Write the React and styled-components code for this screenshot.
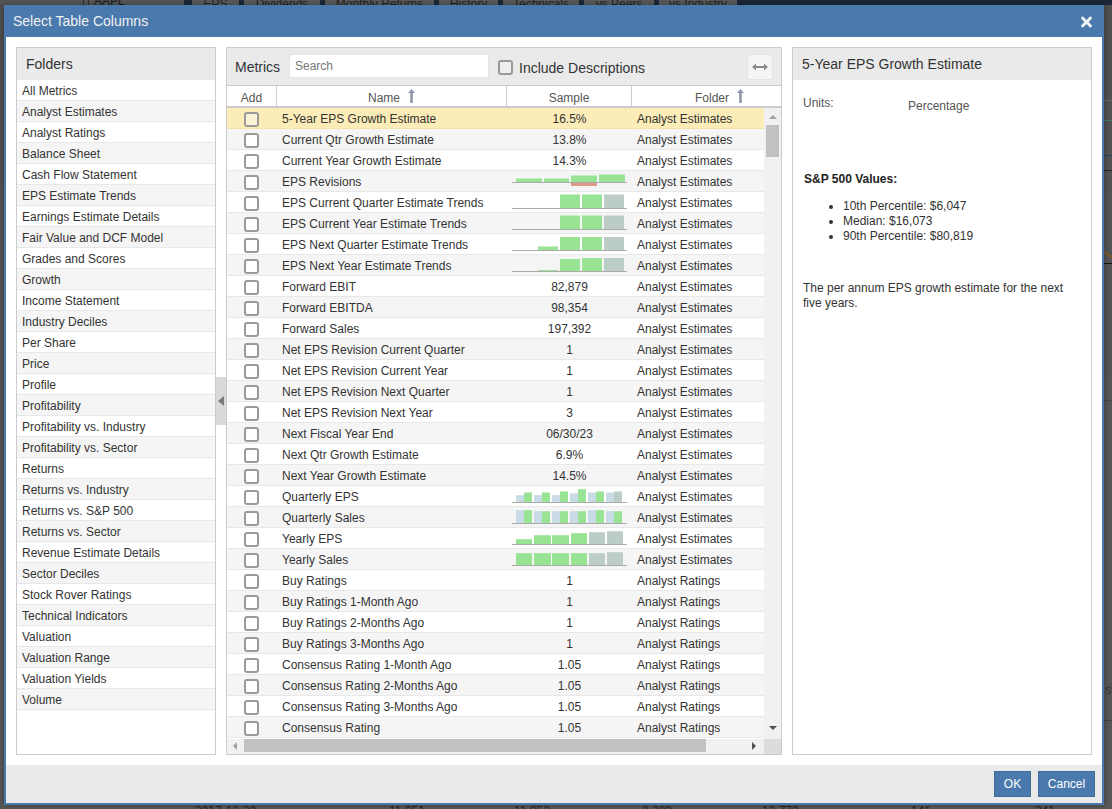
import React from 'react';
import styled, { createGlobalStyle } from 'styled-components';
import { FaTimes } from 'react-icons/fa';

const Global = createGlobalStyle`
  html, body { margin: 0; padding: 0; width: 1112px; height: 809px; overflow: hidden; background: #555; }
  * { box-sizing: border-box; }
`;

const Page = styled.div`
  position: relative;
  width: 1112px;
  height: 809px;
  overflow: hidden;
  background: linear-gradient(180deg, #4e4e4e 0, #545454 30%, #585858 100%);
  font-family: "Liberation Sans", Arial, sans-serif;
  display: flex;
  flex-direction: column;
  justify-content: space-between;
`;

const BackTop = styled.div`
  height: 5px;
  display: flex;
  overflow: hidden;
`;

const BackTicker = styled.div`
  width: 184px;
  flex: none;
  padding-left: 83px;
  display: flex;
  font-size: 12px;
  color: #1d1d1d;
  background: #555;
  & > span { display: block; margin: -6px 0 0 5px; }
`;

const BackRule = styled.i`
  display: block;
  width: 6px;
  height: 5px;
  border-left: 1px solid #2c2c2c;
  border-right: 1px solid #2c2c2c;
`;

const BackTabs = styled.div`
  flex: 1;
  background: #1b2738;
  padding-left: 8px;
  display: flex;
  gap: 5px;
`;

const BackTab = styled.div`
  height: 5px;
  width: ${p => p.$w}px;
  flex: none;
  background: #5a5a5a;
  font-size: 12px;
  line-height: 12px;
  color: #222;
  text-align: center;
  white-space: nowrap;
  & > span { display: block; margin-top: -2px; }
`;

const BackBottom = styled.div`
  height: 4px;
  overflow: hidden;
  padding-left: 195px;
  display: grid;
  grid-template-columns: 194px 125px 128px 120px 149px 124px 1fr;
  font-size: 12px;
  color: #222;
  & > span { display: block; margin-top: -1px; }
`;

const BackChart = styled.svg`
  position: absolute;
  top: 0;
  right: 0;
  display: block;
`;

const BackEdgeText = styled.span`
  position: absolute;
  left: 1105px;
  top: 683px;
  font-size: 12px;
  color: #333;
`;

const Modal = styled.div`
  position: absolute;
  left: 4px;
  top: 5px;
  width: 1100px;
  height: 800px;
  background: #fff;
  border: 2px solid #4a7aad;
  border-top: 0;
  display: flex;
  flex-direction: column;
  box-shadow: 0 0 6px rgba(0, 0, 0, 0.35);
`;

const TitleBar = styled.div`
  height: 32px;
  margin: 0 -2px;
  padding: 0 11px 0 9px;
  background: #4a7aad;
  color: #f0f0f0;
  display: flex;
  align-items: center;
  justify-content: space-between;
  font-size: 14px;
  flex: none;
`;

const Title = styled.span`
  padding-left: 0;
`;

const CloseIcon = styled(FaTimes)`
  width: 13px;
  height: 16px;
  margin-top: 1px;
  color: #f2f4f8;
`;

const Body = styled.div`
  flex: 1;
  min-height: 0;
  padding: 10px;
  display: flex;
`;

const Panel = styled.div`
  height: 708px;
  border: 1px solid #ccc;
  background: #fff;
  display: flex;
  flex-direction: column;
  flex: none;
  width: ${p => p.$w}px;
  overflow: hidden;
`;

const PanelHead = styled.div`
  height: 32px;
  flex: none;
  background: #eaeaea;
  padding: 0 ${p => p.$pad}px;
  display: flex;
  align-items: center;
  font-size: 14px;
  color: #333;
`;

const FolderRow = styled.div`
  height: 21px;
  flex: none;
  padding: 2px 0 0 5px;
  display: flex;
  align-items: center;
  font-size: 12px;
  color: #333;
  background: ${p => (p.$alt ? '#f5f5f5' : '#fff')};
  border-bottom: 1px solid #e8e8e8;
`;

const Splitter = styled.div`
  width: 10px;
  flex: none;
  display: flex;
  align-items: center;
`;

const SplitHandle = styled.div`
  width: 10px;
  height: 48px;
  background: #d9d9d9;
  display: flex;
  align-items: center;
  justify-content: center;
  margin-top: -1px;
  &::before {
    content: '';
    border-style: solid;
    border-width: 5px 6px 5px 0;
    border-color: transparent #7a7a7a transparent transparent;
  }
`;

const Gap = styled.div`
  width: 10px;
  flex: none;
`;

const MetricsBar = styled.div`
  height: 38px;
  flex: none;
  background: #eaeaea;
  padding: 6px 8px 0 8px;
  display: flex;
  align-items: flex-start;
  border-bottom: 1px solid #ccc;
`;

const MetricsLabel = styled.span`
  font-size: 14px;
  color: #333;
  width: 54px;
  flex: none;
  line-height: 27px;
`;

const SearchBox = styled.div`
  width: 200px;
  height: 24px;
  background: #fff;
  border: 1px solid #e4e4e4;
  font-size: 12px;
  color: #777;
  padding-left: 5px;
  line-height: 22px;
  flex: none;
`;

const BarCheck = styled.span`
  width: 15px;
  height: 15px;
  border: 2px solid #999;
  border-radius: 3px;
  background: #eeeeee;
  margin: 6px 6px 0 9px;
  flex: none;
`;

const BarLabel = styled.span`
  font-size: 14px;
  color: #333;
  line-height: 29px;
  flex: 1;
`;

const FitButton = styled.div`
  width: 26px;
  height: 26px;
  background: #f5f5f5;
  border: 1px solid #e4e4e4;
  display: flex;
  align-items: center;
  justify-content: center;
  flex: none;
`;

const HeadRow = styled.div`
  height: 22px;
  flex: none;
  display: grid;
  grid-template-columns: 50px 230px 125px 1fr;
  border-bottom: 2px solid #ccc;
  background: #fff;
`;

const HeadCell = styled.div`
  font-size: 12px;
  color: #555;
  display: flex;
  align-items: center;
  justify-content: center;
  gap: 8px;
  border-right: ${p => (p.$last ? '0' : '1px solid #ccc')};
  padding-top: 4px;
  padding-left: ${p => p.$shift || 0}px;
  position: relative;
`;

const HeadArrow = styled.svg`
  display: block;
  margin-top: -4px;
`;

const TableArea = styled.div`
  position: relative;
  flex: 1;
  min-height: 0;
  display: grid;
  grid-template-columns: 1fr 17px;
  grid-template-rows: 1fr 15px;
  background: #f1f1f1;
`;

const RowsClip = styled.div`
  overflow: hidden;
  background: #fff;
`;

const Row = styled.div`
  height: 21px;
  display: grid;
  grid-template-columns: 50px 230px 125px 1fr;
  grid-template-rows: 20px;
  align-items: center;
  font-size: 12px;
  color: #333;
  background: ${p => (p.$sel ? '#fcedb8' : p.$alt ? '#f5f5f5' : '#fff')};
  border-bottom: 1px solid ${p => (p.$sel ? '#f3e3a8' : '#e8e8e8')};
`;

const RowCheck = styled.span`
  width: 15px;
  height: 15px;
  justify-self: center;
  margin: 3px 2px 0 0;
  border: 2px solid #9a9a9a;
  border-radius: 3px;
  background: ${p => (p.$sel ? '#fbf3d6' : '#fff')};
`;

const NameCell = styled.span`
  padding: 2px 0 0 5px;
  white-space: nowrap;
  overflow: hidden;
`;

const SampleCell = styled.span`
  text-align: center;
  padding-top: 2px;
`;

const FolderCell = styled.span`
  padding: 2px 0 0 5px;
  white-space: nowrap;
`;

const VBar = styled.div`
  background: #f1f1f1;
  display: flex;
  flex-direction: column;
  align-items: center;
  padding-top: 7px;
  position: relative;
`;

const Tri = styled.span`
  width: 0;
  height: 0;
  flex: none;
  border-style: solid;
  ${p => p.$dir === 'up' && 'border-width: 0 4px 4px 4px; border-color: transparent transparent #a3a3a3 transparent;'}
  ${p => p.$dir === 'down' && 'border-width: 4px 4px 0 4px; border-color: #505050 transparent transparent transparent;'}
  ${p => p.$dir === 'left' && 'border-width: 4px 4px 4px 0; border-color: transparent #a3a3a3 transparent transparent;'}
  ${p => p.$dir === 'right' && 'border-width: 4px 0 4px 4px; border-color: transparent transparent transparent #505050;'}
`;

const VThumb = styled.div`
  width: 13px;
  height: 32px;
  background: #c1c1c1;
  margin-top: 6px;
  flex: none;
`;

const VDown = styled(Tri)`
  margin-top: auto;
  margin-bottom: 9px;
`;

const HBar = styled.div`
  background: #f1f1f1;
  display: flex;
  align-items: flex-start;
  padding-left: 6px;
`;

const HThumb = styled.div`
  width: 462px;
  height: 13px;
  background: #c1c1c1;
  margin-left: 7px;
  flex: none;
`;

const HLeft = styled(Tri)`
  margin-top: 3px;
`;

const HRight = styled(Tri)`
  margin: 3px 0 0 46px;
`;

const Corner = styled.div`
  background: #dcdcdc;
`;

const DetailBody = styled.div`
  padding: 0 10px;
  font-size: 12px;
  color: #333;
  line-height: 15px;
  flex: 1;
`;

const UnitsRow = styled.div`
  display: grid;
  grid-template-columns: 105px 1fr;
  color: #555;
  padding-top: 16px;
`;

const UnitsValue = styled.span`
  padding-top: 3px;
`;

const ValuesTitle = styled.div`
  font-weight: bold;
  margin-top: 58px;
  padding-left: 1px;
  color: #222;
`;

const ValuesList = styled.ul`
  margin: 12px 0 0;
  padding: 0 0 0 40px;
`;

const Desc = styled.p`
  margin: 37px 0 0;
`;

const Footer = styled.div`
  height: 38px;
  flex: none;
  background: #eaeaea;
  display: flex;
  justify-content: flex-end;
  align-items: flex-start;
  padding: 6px 7px 0 0;
  gap: 7px;
`;

const Btn = styled.div`
  height: 26px;
  width: ${p => p.$w}px;
  background: #4a7aad;
  border: 1px solid #3f6d9f;
  color: #fff;
  font-size: 12px;
  display: flex;
  align-items: center;
  justify-content: center;
`;

const TABS = [
  ['EPS', 47], ['Dividends', 76], ['Monthly Returns', 109], ['History', 59],
  ['Technicals', 76], ['vs Peers', 70], ['vs Industry', 78],
];

const FOLDERS = [
  'All Metrics', 'Analyst Estimates', 'Analyst Ratings', 'Balance Sheet', 'Cash Flow Statement',
  'EPS Estimate Trends', 'Earnings Estimate Details', 'Fair Value and DCF Model', 'Grades and Scores',
  'Growth', 'Income Statement', 'Industry Deciles', 'Per Share', 'Price', 'Profile', 'Profitability',
  'Profitability vs. Industry', 'Profitability vs. Sector', 'Returns', 'Returns vs. Industry',
  'Returns vs. S&P 500', 'Returns vs. Sector', 'Revenue Estimate Details', 'Sector Deciles',
  'Stock Rover Ratings', 'Technical Indicators', 'Valuation', 'Valuation Range', 'Valuation Yields', 'Volume',
];

const G = '#98e394';
const S = '#bccdc6';
const B = '#c9dbe5';
const R = '#dc9b86';

const trend = (a, b, c, d) => [
  [26, 20, a, G], [48, 20, b, G], [70, 20, c, G], [92, 20, d, S],
];

const pairs = (list) =>
  list.flatMap(([b, g, last], i) => {
    const x = 4 + i * 18;
    return [[x, 8, b, B], [x + 8, 8, g, last ? S : G]];
  });

const SPARK = {
  rev: {
    base: 11.5,
    bars: [[4, 26, 4, G], [32, 25, 4, G], [59, 26, 7, G], [87, 26, 8, G], [59, 26, -3.5, R]],
  },
  q1: { base: 16.5, bars: [[48, 20, 14, G], [70, 20, 14, G], [92, 20, 14, S]] },
  q2: { base: 16.5, bars: [[48, 20, 14, G], [70, 20, 14, G], [92, 20, 14, S]] },
  q3: { base: 16.5, bars: trend(4, 13.5, 13.5, 13.5) },
  q4: { base: 16.5, bars: trend(1.5, 12.5, 13.5, 13.5) },
  qe: {
    base: 16.5,
    bars: pairs([[7.3, 10], [7.3, 10], [7.3, 11], [9.3, 13.3], [10, 11], [10, 11, true]]),
  },
  qs: {
    base: 16.5,
    bars: pairs([[13.3, 13.3], [12.3, 12.3], [12.3, 12.3], [12.3, 12.3], [13.3, 13.3], [12.3, 12.3]]),
  },
  ye: {
    base: 16.5,
    bars: [[4, 16, 5.3, G], [22, 17, 9.3, G], [40, 17, 9.3, G], [59, 16, 11.3, G], [77, 16, 12.3, S], [95, 16, 13.3, S]],
  },
  ys: {
    base: 16.5,
    bars: [[4, 16, 12.3, G], [22, 17, 12.3, G], [40, 17, 12.3, G], [59, 16, 12.3, G], [77, 16, 12.3, S], [95, 16, 13.3, S]],
  },
};

const E = 'Analyst Estimates';
const A = 'Analyst Ratings';
const ROWS = [
  ['5-Year EPS Growth Estimate', '16.5%', E],
  ['Current Qtr Growth Estimate', '13.8%', E],
  ['Current Year Growth Estimate', '14.3%', E],
  ['EPS Revisions', 'rev', E],
  ['EPS Current Quarter Estimate Trends', 'q1', E],
  ['EPS Current Year Estimate Trends', 'q2', E],
  ['EPS Next Quarter Estimate Trends', 'q3', E],
  ['EPS Next Year Estimate Trends', 'q4', E],
  ['Forward EBIT', '82,879', E],
  ['Forward EBITDA', '98,354', E],
  ['Forward Sales', '197,392', E],
  ['Net EPS Revision Current Quarter', '1', E],
  ['Net EPS Revision Current Year', '1', E],
  ['Net EPS Revision Next Quarter', '1', E],
  ['Net EPS Revision Next Year', '3', E],
  ['Next Fiscal Year End', '06/30/23', E],
  ['Next Qtr Growth Estimate', '6.9%', E],
  ['Next Year Growth Estimate', '14.5%', E],
  ['Quarterly EPS', 'qe', E],
  ['Quarterly Sales', 'qs', E],
  ['Yearly EPS', 'ye', E],
  ['Yearly Sales', 'ys', E],
  ['Buy Ratings', '1', A],
  ['Buy Ratings 1-Month Ago', '1', A],
  ['Buy Ratings 2-Months Ago', '1', A],
  ['Buy Ratings 3-Months Ago', '1', A],
  ['Consensus Rating 1-Month Ago', '1.05', A],
  ['Consensus Rating 2-Months Ago', '1.05', A],
  ['Consensus Rating 3-Months Ago', '1.05', A],
  ['Consensus Rating', '1.05', A],
];

const SparkSvg = styled.svg`
  display: block;
  margin-left: 5px;
`;

function Spark({ id }) {
  const { base, bars } = SPARK[id];
  return (
    <SparkSvg width="115" height="20" viewBox="0 0 115 20">
      {bars.map(([x, w, h, c], i) => (
        <rect key={i} x={x} y={h > 0 ? base - h : base} width={w} height={Math.abs(h)} fill={c} />
      ))}
      <rect x="0" y={base - 0.5} width="115" height="1" fill="#aaa" />
    </SparkSvg>
  );
}

function SortArrow() {
  return (
    <HeadArrow width="7" height="14" viewBox="0 0 7 14">
      <path d="M3.5 0 L7 4 L4.8 4 L4.8 14 L2.2 14 L2.2 4 L0 4 Z" fill="#8f97a8" />
    </HeadArrow>
  );
}

function FitIcon() {
  return (
    <svg width="16" height="8" viewBox="0 0 16 8">
      <path d="M0 4 L4 0.5 L4 3 L12 3 L12 0.5 L16 4 L12 7.5 L12 5 L4 5 L4 7.5 Z" fill="#8c8c8c" />
    </svg>
  );
}

export default function App() {
  return (
    <Page>
      <Global />
      <BackTop>
        <BackTicker>
          <BackRule />
          <span>AAPL</span>
        </BackTicker>
        <BackTabs>
          {TABS.map(([t, w]) => (
            <BackTab key={t} $w={w}><span>{t}</span></BackTab>
          ))}
        </BackTabs>
      </BackTop>
      <BackBottom>
        {['2017-12-29', '11,051', '11,052', '2,380', '12,779', '141', '241'].map(t => (
          <span key={t}>{t}</span>
        ))}
      </BackBottom>
      <BackChart width="8" height="809" viewBox="0 0 8 809">
        <rect x="0" y="100" width="8" height="1" fill="#666" />
        <rect x="0" y="120" width="8" height="1" fill="#3f7a6a" />
        <rect x="0" y="155" width="8" height="1" fill="#2c3f66" />
        <rect x="0" y="170" width="8" height="1" fill="#222" />
        <path d="M0 252 L8 257" stroke="#8a5a20" strokeWidth="1.5" />
        <rect x="0" y="263" width="8" height="1" fill="#111" />
        <rect x="0" y="400" width="8" height="1" fill="#444" />
        <rect x="0" y="720" width="8" height="1" fill="#444" />
      </BackChart>
      <BackEdgeText>st</BackEdgeText>

      <Modal>
        <TitleBar>
          <Title>Select Table Columns</Title>
          <CloseIcon />
        </TitleBar>
        <Body>
          <Panel $w={200}>
            <PanelHead $pad={9}>Folders</PanelHead>
            {FOLDERS.map((f, i) => (
              <FolderRow key={f} $alt={i % 2 === 1}>{f}</FolderRow>
            ))}
          </Panel>
          <Splitter><SplitHandle /></Splitter>
          <Panel $w={556}>
            <MetricsBar>
              <MetricsLabel>Metrics</MetricsLabel>
              <SearchBox>Search</SearchBox>
              <BarCheck />
              <BarLabel>Include Descriptions</BarLabel>
              <FitButton><FitIcon /></FitButton>
            </MetricsBar>
            <HeadRow>
              <HeadCell>Add</HeadCell>
              <HeadCell>Name <SortArrow /></HeadCell>
              <HeadCell>Sample</HeadCell>
              <HeadCell $last $shift={26}>Folder <SortArrow /></HeadCell>
            </HeadRow>
            <TableArea>
              <RowsClip>
                {ROWS.map(([n, s, f], i) => (
                  <Row key={n} $sel={i === 0} $alt={i % 2 === 1}>
                    <RowCheck $sel={i === 0} />
                    <NameCell>{n}</NameCell>
                    {SPARK[s] ? <Spark id={s} /> : <SampleCell>{s}</SampleCell>}
                    <FolderCell>{f}</FolderCell>
                  </Row>
                ))}
              </RowsClip>
              <VBar>
                <Tri $dir="up" />
                <VThumb />
                <VDown $dir="down" />
              </VBar>
              <HBar>
                <HLeft $dir="left" />
                <HThumb />
                <HRight $dir="right" />
              </HBar>
              <Corner />
            </TableArea>
          </Panel>
          <Gap />
          <Panel $w={300}>
            <PanelHead $pad={9}>5-Year EPS Growth Estimate</PanelHead>
            <DetailBody>
              <UnitsRow>
                <span>Units:</span>
                <UnitsValue>Percentage</UnitsValue>
              </UnitsRow>
              <ValuesTitle>S&amp;P 500 Values:</ValuesTitle>
              <ValuesList>
                <li>10th Percentile: $6,047</li>
                <li>Median: $16,073</li>
                <li>90th Percentile: $80,819</li>
              </ValuesList>
              <Desc>The per annum EPS growth estimate for the next five years.</Desc>
            </DetailBody>
          </Panel>
        </Body>
        <Footer>
          <Btn $w={37}>OK</Btn>
          <Btn $w={57}>Cancel</Btn>
        </Footer>
      </Modal>
    </Page>
  );
}
